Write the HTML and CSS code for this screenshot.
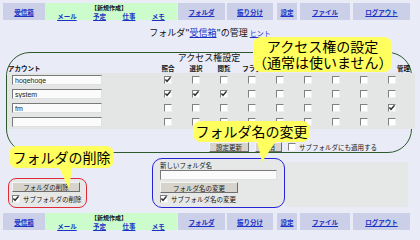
FILE: index.html
```html
<!DOCTYPE html>
<html>
<head>
    <title>フォルダ管理</title>
    <link rel="stylesheet" href="styles.css">
</head>
<body>
    <nav class="menu">
        <div class="menu-item inbox"><a href="#">受信箱</a></div>
        <div class="menu-item menu-new">
            <div class="menu-new-title">【新規作成】</div>
            <div class="menu-new-links">
                <a href="#">メール</a>
                <a href="#">予定</a>
                <a href="#">仕事</a>
                <a href="#">メモ</a>
            </div>
        </div>
        <div class="menu-item folder"><a href="#">フォルダ</a></div>
        <div class="menu-item filter"><a href="#">振り分け</a></div>
        <div class="menu-item settings"><a href="#">設定</a></div>
        <div class="menu-item file"><a href="#">ファイル</a></div>
        <div class="menu-item logout"><a href="#">ログアウト</a></div>
    </nav>

    <h1 class="title">フォルダ"<a href="#">受信箱</a>"の管理 <a href="#" class="hint">ヒント</a></h1>

    <section class="acl">
        <div class="acl-caption">アクセス権設定</div>
        <div class="acl-grid">
            <div class="acl-head acct">アカウント</div>
            <div class="acl-head">照合</div>
            <div class="acl-head">選択</div>
            <div class="acl-head">閲覧</div>
            <div class="acl-head">フラグ</div>
            <div class="acl-head"></div>
            <div class="acl-head"></div>
            <div class="acl-head"></div>
            <div class="acl-head"></div>
            <div class="acl-head acl-head-last">管理</div>
        </div>
        <div class="acl-grid acl-rows">
            <div class="acl-cell acct"><input type="text" class="field" value="hogehoge"></div>
            <div class="acl-cell"><input type="checkbox" class="cb" checked></div>
            <div class="acl-cell"><input type="checkbox" class="cb"></div>
            <div class="acl-cell"><input type="checkbox" class="cb"></div>
            <div class="acl-cell"><input type="checkbox" class="cb"></div>
            <div class="acl-cell"><input type="checkbox" class="cb"></div>
            <div class="acl-cell"><input type="checkbox" class="cb"></div>
            <div class="acl-cell"><input type="checkbox" class="cb"></div>
            <div class="acl-cell"><input type="checkbox" class="cb"></div>
            <div class="acl-cell"><input type="checkbox" class="cb"></div>

            <div class="acl-cell acct"><input type="text" class="field" value="system"></div>
            <div class="acl-cell"><input type="checkbox" class="cb" checked></div>
            <div class="acl-cell"><input type="checkbox" class="cb" checked></div>
            <div class="acl-cell"><input type="checkbox" class="cb" checked></div>
            <div class="acl-cell"><input type="checkbox" class="cb"></div>
            <div class="acl-cell"><input type="checkbox" class="cb"></div>
            <div class="acl-cell"><input type="checkbox" class="cb"></div>
            <div class="acl-cell"><input type="checkbox" class="cb"></div>
            <div class="acl-cell"><input type="checkbox" class="cb"></div>
            <div class="acl-cell"><input type="checkbox" class="cb"></div>

            <div class="acl-cell acct"><input type="text" class="field" value="fm"></div>
            <div class="acl-cell"><input type="checkbox" class="cb"></div>
            <div class="acl-cell"><input type="checkbox" class="cb"></div>
            <div class="acl-cell"><input type="checkbox" class="cb"></div>
            <div class="acl-cell"><input type="checkbox" class="cb"></div>
            <div class="acl-cell"><input type="checkbox" class="cb"></div>
            <div class="acl-cell"><input type="checkbox" class="cb"></div>
            <div class="acl-cell"><input type="checkbox" class="cb"></div>
            <div class="acl-cell"><input type="checkbox" class="cb"></div>
            <div class="acl-cell"><input type="checkbox" class="cb" checked></div>

            <div class="acl-cell acct"><input type="text" class="field" value=""></div>
            <div class="acl-cell"><input type="checkbox" class="cb"></div>
            <div class="acl-cell"><input type="checkbox" class="cb"></div>
            <div class="acl-cell"><input type="checkbox" class="cb"></div>
            <div class="acl-cell"><input type="checkbox" class="cb"></div>
            <div class="acl-cell"><input type="checkbox" class="cb"></div>
            <div class="acl-cell"><input type="checkbox" class="cb"></div>
            <div class="acl-cell"><input type="checkbox" class="cb"></div>
            <div class="acl-cell"><input type="checkbox" class="cb"></div>
            <div class="acl-cell"><input type="checkbox" class="cb"></div>
        </div>
        <div class="acl-actions">
            <button class="btn">設定更新</button>
            <button class="btn">取消</button>
            <label class="check"><input type="checkbox" class="cb">サブフォルダにも適用する</label>
        </div>
    </section>

    <div class="ops">
        <div class="op op-delete">
            <button class="btn btn-delete">フォルダの削除</button>
            <label class="check"><input type="checkbox" class="cb" checked>サブフォルダの削除</label>
        </div>
        <div class="op op-rename">
            <div class="op-label">新しいフォルダ名</div>
            <input type="text" class="field field-wide" value="">
            <button class="btn btn-rename">フォルダ名の変更</button>
            <label class="check"><input type="checkbox" class="cb" checked>サブフォルダ名の変更</label>
        </div>
        <div class="op op-blank"></div>
    </div>

    <nav class="menu menu-bottom">
        <div class="menu-item inbox"><a href="#">受信箱</a></div>
        <div class="menu-item menu-new">
            <div class="menu-new-title">【新規作成】</div>
            <div class="menu-new-links">
                <a href="#">メール</a>
                <a href="#">予定</a>
                <a href="#">仕事</a>
                <a href="#">メモ</a>
            </div>
        </div>
        <div class="menu-item folder"><a href="#">フォルダ</a></div>
        <div class="menu-item filter"><a href="#">振り分け</a></div>
        <div class="menu-item settings"><a href="#">設定</a></div>
        <div class="menu-item file"><a href="#">ファイル</a></div>
        <div class="menu-item logout"><a href="#">ログアウト</a></div>
    </nav>

    <div class="callout callout-acl">アクセス権の設定<br>（通常は使いません）</div>
    <div class="callout callout-rename">フォルダ名の変更</div>
    <div class="callout callout-delete">フォルダの削除</div>
</body>
</html>
```

FILE: styles.css
```css
body {
    margin: 0;
    width: 420px;
    height: 240px;
    overflow: hidden;
    position: relative;
    background: #e9ebf7;
    font-family: "Noto Sans CJK JP", sans-serif;
    color: #111;
}
a {
    color: #1a33c6;
}

/* menu bar */
.menu {
    display: flex;
    height: 17px;
    margin: 3px 0 0 3px;
}
.menu-bottom {
    margin-top: 5px;
}
.menu-item {
    background: #cbcfe8;
    display: flex;
    align-items: center;
    justify-content: center;
    font-size: 6.5px;
    font-weight: bold;
}
.inbox { width: 42px; }
.menu-new {
    width: 132px;
    background: #ccfccc;
    flex-direction: column;
    justify-content: flex-start;
}
.folder { width: 47px; margin-left: 1px; }
.filter { width: 46px; margin-left: 2px; }
.settings { width: 20px; margin-left: 4px; }
.file { width: 50px; margin-left: 3px; }
.logout { width: 57px; margin-left: 3px; }
.menu-new-title {
    font-size: 6px;
    line-height: 7px;
    margin-top: 1px;
    margin-left: -4px;
}
.menu-new-links {
    display: flex;
    width: 100%;
    justify-content: space-around;
    padding: 0 4px;
    margin-top: 1px;
    box-sizing: border-box;
    line-height: 8px;
}

/* page title */
.title {
    margin: 7px 0 13px;
    text-align: center;
    font-size: 9px;
    font-weight: normal;
    line-height: 12px;
    padding-left: 0;
}
.hint {
    font-size: 7px;
}

/* access rights panel */
.acl {
    width: 404px;
    height: 99px;
    margin-left: 6px;
    border: 1px solid #2c5a2c;
    border-radius: 24px;
}
.acl-caption {
    text-align: center;
    font-size: 9px;
    line-height: 10px;
}
.acl-grid {
    display: grid;
    grid-template-columns: 147px repeat(9, 28px);
}
.acl-head {
    font-size: 6.5px;
    font-weight: bold;
    line-height: 10px;
    text-align: center;
    white-space: nowrap;
}
.acl-head.acct {
    text-align: left;
    padding-left: 1px;
}
.acl-head-last {
    text-align: right;
    margin-right: -4px;
}
.acl-rows {
    background: #e3e6e4;
    margin-right: -4px;
}
.acl-cell {
    height: 14px;
    display: flex;
    align-items: center;
    justify-content: center;
}
.acl-cell.acct {
    justify-content: flex-start;
    padding-left: 5px;
}
.acl-actions {
    display: flex;
    justify-content: flex-end;
    align-items: center;
    gap: 6px;
    margin-top: 13px;
    padding-right: 34px;
    height: 10px;
}

/* form controls */
.field {
    width: 90px;
    height: 10px;
    box-sizing: border-box;
    margin: 0;
    padding: 0 2px;
    border: 1px solid;
    border-color: #7a7a7a #e0e0e0 #e0e0e0 #7a7a7a;
    background: #fbfbfb;
    font-family: "Liberation Sans", sans-serif;
    font-size: 7px;
    color: #222;
}
.field-wide {
    width: 117px;
    display: block;
}
.cb {
    appearance: none;
    width: 8px;
    height: 8px;
    margin: 0;
    border: 1px solid;
    border-color: #808080 #f0f0f0 #f0f0f0 #808080;
    background: #fff center / 8px 8px no-repeat;
    box-sizing: border-box;
}
.cb:checked {
    background-image: url("data:image/svg+xml,%3Csvg xmlns='http://www.w3.org/2000/svg' viewBox='0 0 6 6'%3E%3Cpath d='M1 2.6l1.3 1.4 2.6-3' fill='none' stroke='%23333' stroke-width='1.1'/%3E%3C/svg%3E");
}
.btn {
    height: 10px;
    padding: 0 6px;
    border: 1px solid;
    border-color: #f4f4f4 #6e6e6e #6e6e6e #f4f4f4;
    background: #d6d3cc;
    font-family: "Noto Sans CJK JP", sans-serif;
    font-size: 6.5px;
    line-height: 8px;
    color: #222;
}
.check {
    display: flex;
    align-items: center;
    gap: 3px;
    font-size: 6.5px;
    line-height: 8px;
}

/* delete / rename row */
.ops {
    display: flex;
    align-items: flex-end;
    margin-top: 5px;
    height: 50px;
}
.op {
    box-sizing: border-box;
    background: #e6e8e7;
}
.op-delete {
    width: 79px;
    height: 30px;
    margin-left: 8px;
    border: 1px solid #e02a3a;
    border-radius: 8px;
    padding: 3px 0 0 3px;
    display: flex;
    flex-direction: column;
    gap: 3px;
}
.btn-delete {
    width: 68px;
}
.op-rename {
    width: 133px;
    height: 50px;
    margin-left: 65px;
    border: 1px solid #2424d6;
    border-radius: 10px;
    padding: 2px 0 0 7px;
}
.op-label {
    font-size: 6.5px;
    line-height: 9px;
}
.btn-rename {
    width: 78px;
    height: 11px;
    margin: 2px 0 2px;
    display: block;
}
.op-blank {
    width: 123px;
    height: 45px;
    margin-bottom: 1px;
}

/* yellow annotations */
.callout {
    position: absolute;
    background: #ffff5e;
    border-radius: 8px;
    font-size: 14px;
    text-align: center;
    color: #000;
}
.callout::after {
    content: "";
    position: absolute;
    background: #ffff5e;
}
.callout-acl {
    left: 253px;
    top: 37px;
    width: 139px;
    height: 35px;
    line-height: 16px;
    padding-top: 1px;
    box-sizing: border-box;
    white-space: nowrap;
}
.callout-acl::after {
    display: none;
}
.callout-rename {
    left: 193px;
    top: 121px;
    width: 117px;
    height: 21px;
    line-height: 21px;
}
.callout-rename::after {
    left: 64px;
    top: 20px;
    width: 19px;
    height: 21px;
    clip-path: polygon(0 0, 100% 0, 5px 100%);
}
.callout-delete {
    left: 9px;
    top: 146px;
    width: 105px;
    height: 22px;
    line-height: 22px;
}
.callout-delete::after {
    left: 50px;
    top: 21px;
    width: 13px;
    height: 22px;
    clip-path: polygon(0 0, 100% 0, 10px 100%);
}
```
